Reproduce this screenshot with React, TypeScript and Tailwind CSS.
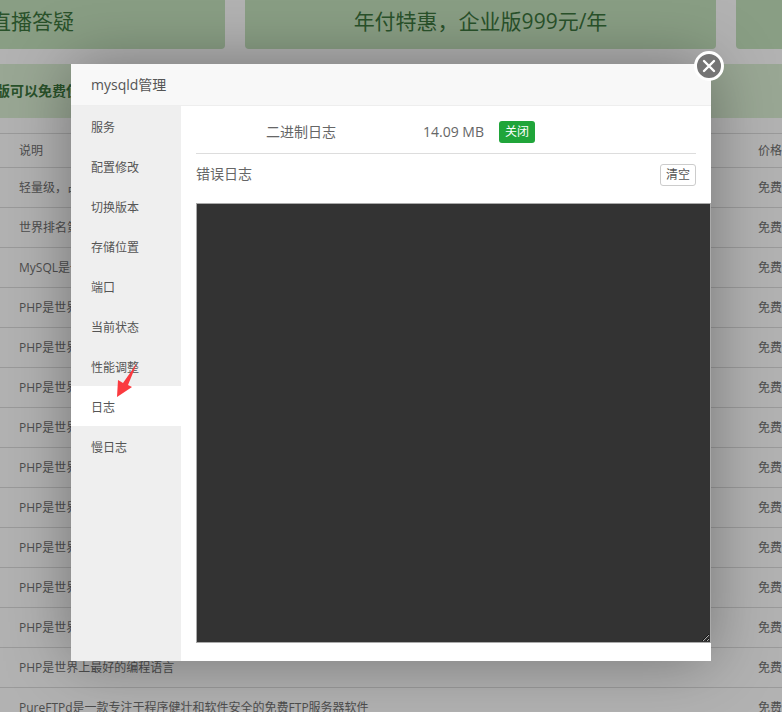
const font = { fontFamily: '"Open Sans", "Noto Sans CJK SC", sans-serif' };

const menu = ["服务", "配置修改", "切换版本", "存储位置", "端口", "当前状态", "性能调整", "日志", "慢日志"];

const rows = [
  "轻量级，占有内存少，并发能力强",
  "世界排名第一的Web服务器",
  "MySQL是一种关系数据库管理系统",
  "PHP是世界上最好的编程语言",
  "PHP是世界上最好的编程语言",
  "PHP是世界上最好的编程语言",
  "PHP是世界上最好的编程语言",
  "PHP是世界上最好的编程语言",
  "PHP是世界上最好的编程语言",
  "PHP是世界上最好的编程语言",
  "PHP是世界上最好的编程语言",
  "PHP是世界上最好的编程语言",
  "PHP是世界上最好的编程语言",
  "PureFTPd是一款专注于程序健壮和软件安全的免费FTP服务器软件",
];

function Background() {
  return (
    <div className="h-[712px] overflow-hidden bg-white">
      <div className="flex h-[49px] gap-5 text-[21px] text-[#3c763d]">
        <div className="flex w-[225px] items-center justify-end rounded-br bg-[#c5e2be] pr-[151px] pb-[6px] whitespace-nowrap">
          直播答疑
        </div>
        <div className="flex w-[471px] items-center justify-center rounded-b bg-[#c5e2be] pb-[6px]">
          年付特惠，企业版999元/年
        </div>
        <div className="flex-1 rounded-bl bg-[#c5e2be]" />
      </div>
      <div className="mt-[15px] flex h-[54px] items-center bg-[#dcf0d5] text-sm font-bold whitespace-nowrap text-[#3c763d]">
        <span className="-ml-[4px]">版可以免费使用</span>
      </div>
      <div className="mt-[15px] border-t border-[#ddd] text-xs text-[#707070]">
        <div className="flex h-[34px] items-center justify-between border-b border-[#ddd] pl-[19px]">
          <span>说明</span>
          <span className="w-6 whitespace-nowrap">价格</span>
        </div>
        {rows.map((text, i) => (
          <div key={i} className="flex h-10 items-center justify-between border-b border-[#ddd] pt-px pl-[19px]">
            <span>{text}</span>
            <span className="w-6 whitespace-nowrap">免费</span>
          </div>
        ))}
      </div>
    </div>
  );
}

function Modal() {
  return (
    <div className="absolute top-[64px] left-[71px] flex h-[597px] w-[640px] flex-col bg-white text-[#666] shadow-[0_0_60px_rgba(0,0,0,0.35)]">
      <div className="flex h-[42px] shrink-0 items-center border-b border-[#eee] bg-[#f8f8f8] pl-5 text-sm text-[#555]">
        mysqld管理
      </div>
      <div className="flex min-h-0 flex-1">
        <ul className="w-[110px] shrink-0 bg-[#efefef] text-xs text-[#555]">
          {menu.map((item) => (
            <li key={item} className={`flex h-10 items-center pt-1 pl-5 ${item === "日志" ? "bg-white" : ""}`}>
              {item}
            </li>
          ))}
        </ul>
        <div className="min-w-0 flex-1 pl-[15px]">
          <div className="mr-[15px] flex h-[48px] items-center border-b border-[#ddd] pt-[5px] text-sm">
            <span className="ml-[70px]">二进制日志</span>
            <span className="ml-[87px]">14.09 MB</span>
            <button className="ml-[15px] flex h-[22px] w-9 items-center justify-center rounded-[3px] bg-[#20a53a] text-xs text-white">
              关闭
            </button>
          </div>
          <div className="mr-[15px] flex h-[49px] items-start justify-between pt-[10px]">
            <span className="text-sm leading-[20px]">错误日志</span>
            <button className="flex h-[22px] w-9 items-center justify-center rounded-[3px] border border-[#ccc] bg-white text-xs text-[#555]">
              清空
            </button>
          </div>
          <textarea
            readOnly
            defaultValue=""
            className="block h-[440px] w-[515px] border border-[#aaa] bg-[#333] text-white"
          />
        </div>
      </div>
    </div>
  );
}

export default function App() {
  return (
    <div className="relative h-[712px] overflow-hidden" style={font}>
      <Background />
      <div className="absolute inset-0 bg-black/30" />
      <Modal />
      <button className="absolute top-[51px] left-[694px] flex h-[30px] w-[30px] items-center justify-center rounded-full border-[3px] border-white bg-[#757575]">
        <svg width="14" height="14" viewBox="0 0 14 14">
          <path d="M2 2 L12 12 M12 2 L2 12" stroke="#fff" strokeWidth="2.4" strokeLinecap="round" />
        </svg>
      </button>
      <svg className="absolute top-[360px] left-[112px]" width="30" height="40" viewBox="0 0 30 40">
        <polygon points="25,3 16,25 20,27 5,37 6,20 11,23" fill="#fb3a3f" />
      </svg>
    </div>
  );
}
